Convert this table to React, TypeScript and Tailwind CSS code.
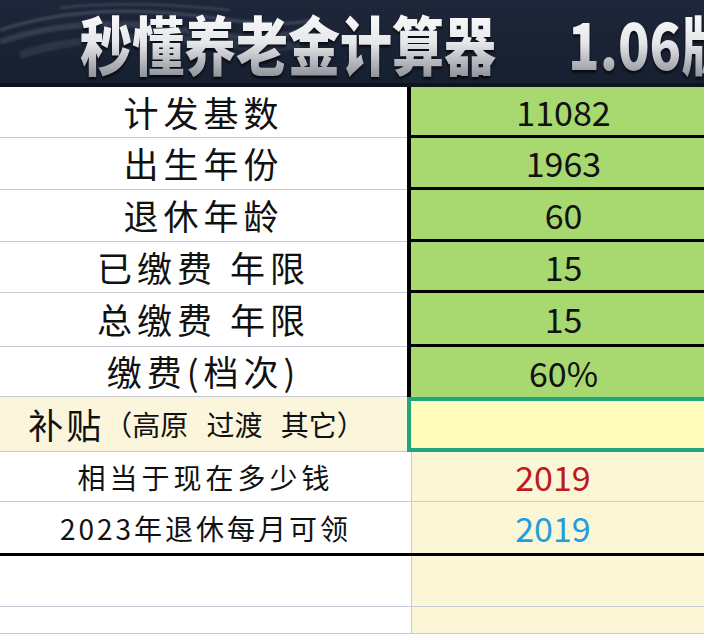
import React from 'react';

const greenRows = [
    { label: '计发基数', value: '11082', h: 'h-[51px]' },
    { label: '出生年份', value: '1963', h: 'h-[52px]' },
    { label: '退休年龄', value: '60', h: 'h-[52px]' },
    { label: '已缴费 年限', value: '15', h: 'h-[51px]' },
    { label: '总缴费 年限', value: '15', h: 'h-[54px]' },
    { label: '缴费(档次)', value: '60%', h: 'h-[50px]' },
];

const Header: React.FC = () => (
    <div className="relative h-[87px] bg-[#0e131c] overflow-hidden">
        <div className="relative h-[83px] bg-linear-to-b from-[#1e2739] to-[#172031] flex items-center pl-[80px] pt-[4px]">
            {/* smoke wisps */}
            <svg className="absolute left-0 top-0 w-[320px] h-[83px] blur-[1px]" viewBox="0 0 320 83">
                <path d="M0 30 C60 10 120 8 180 14 S280 30 320 18" stroke="#8a96ad" strokeOpacity="0.3" strokeWidth="3" fill="none" />
                <path d="M0 42 C50 24 110 20 170 28 S250 44 310 30" stroke="#8a96ad" strokeOpacity="0.22" strokeWidth="6" fill="none" />
                <path d="M20 55 C70 38 130 36 190 40 S260 52 300 44" stroke="#7c88a0" strokeOpacity="0.18" strokeWidth="8" fill="none" />
                <path d="M60 8 C110 2 170 4 230 10" stroke="#a6b0c4" strokeOpacity="0.25" strokeWidth="2" fill="none" />
            </svg>
            <span className="relative inline-block scale-y-[1.22] text-[52px] leading-[1.2] font-black bg-linear-to-b from-white via-[#e6e7ea] to-[#868a92] bg-clip-text text-transparent drop-shadow-[0_2px_1px_rgba(0,0,0,0.7)] whitespace-nowrap">
                秒懂养老金计算器
            </span>
            <span className="relative inline-block ml-[72px] scale-y-[1.22] text-[52px] leading-[1.2] font-black bg-linear-to-b from-white via-[#e6e7ea] to-[#868a92] bg-clip-text text-transparent drop-shadow-[0_2px_1px_rgba(0,0,0,0.7)] whitespace-nowrap">
                1.06版
            </span>
        </div>
    </div>
);

export default function App() {
    return (
        <div className="w-[704px] h-[634px] overflow-hidden bg-white font-['Noto_Sans_CJK_SC','Noto_Sans',sans-serif] text-[#111]">
            <div className="w-[716px] h-full flex flex-col">
                <Header />

                {greenRows.map((r, i) => (
                    <div key={i} className={`flex shrink-0 ${r.h}`}>
                        <div className="w-[407px] border-b border-[#c5cad6] flex items-center justify-center text-[35px] tracking-[5px] whitespace-pre">
                            {r.label}
                        </div>
                        <div className={`flex-1 bg-[#a8d870] border-l-4 border-black flex items-center justify-center text-[34px] ${i < greenRows.length - 1 ? 'border-b-[3px]' : ''}`}>
                            {r.value}
                        </div>
                    </div>
                ))}

                {/* subsidy row, selected cell */}
                <div className="flex shrink-0 h-[55px]">
                    <div className="w-[407px] bg-[#fbf5dc] border-b border-[#c5cad6] flex items-center justify-center pr-[14px]">
                        <span className="text-[35px] tracking-[3px]">补贴</span>
                        <span className="text-[28px] [word-spacing:12px]">（高原 过渡 其它）</span>
                    </div>
                    <div className="flex-1 bg-[#fffcbc] border-4 border-[#22a77c]" />
                </div>

                <div className="flex shrink-0 h-[50px]">
                    <div className="w-[411px] border-b border-[#c5cad6] flex items-center justify-center text-[28px] tracking-[4px]">
                        相当于现在多少钱
                    </div>
                    <div className="flex-1 bg-[#faf6d6] border-l border-b border-[#c5cad6] flex items-center justify-center pr-[22px] text-[34px] text-[#c01a1e]">
                        2019
                    </div>
                </div>

                <div className="flex shrink-0 h-[54px] border-b-[3px] border-black">
                    <div className="w-[411px] flex items-center justify-center text-[28px] tracking-[3px]">
                        2023年退休每月可领
                    </div>
                    <div className="flex-1 bg-[#faf6d6] border-l border-[#c5cad6] flex items-center justify-center pr-[22px] text-[34px] text-[#1f9fe0]">
                        2019
                    </div>
                </div>

                <div className="flex shrink-0 h-[51px]">
                    <div className="w-[411px] border-b border-[#c5cad6]" />
                    <div className="flex-1 bg-[#faf6d6] border-l border-b border-[#c5cad6]" />
                </div>

                <div className="flex flex-1">
                    <div className="w-[411px] border-b border-[#c5cad6]" />
                    <div className="flex-1 bg-[#faf6d6] border-l border-b border-[#c5cad6]" />
                </div>
            </div>
        </div>
    );
}
